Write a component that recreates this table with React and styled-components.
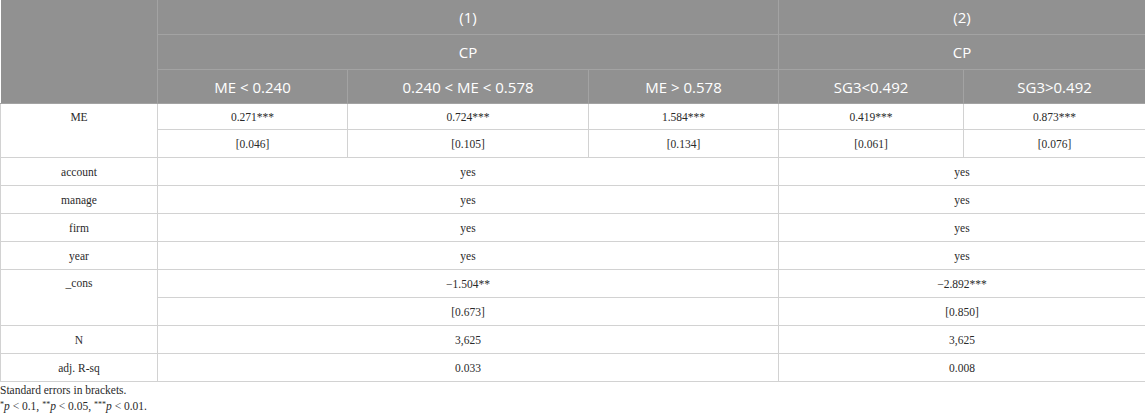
import React from "react"
import styled, { createGlobalStyle } from 'styled-components'

const GlobalStyle = createGlobalStyle`
  body {
    margin: 0;
    background: #ffffff;
  }
`

const Page = styled.div`
  width: 1145px;
  font-family: "Liberation Serif", "Times New Roman", serif;
  color: #222;
`

const Table = styled.table`
  width: 1145px;
  border-collapse: collapse;
  table-layout: fixed;
`

const HeadCell = styled.th`
  background: #919191;
  color: #ffffff;
  font-family: "Open Sans", "Noto Sans", sans-serif;
  font-weight: 400;
  font-size: 15px;
  height: ${props => props.h || 34}px;
  padding: 0;
  text-align: center;
  vertical-align: middle;
  border: 1px solid #a3a3a3;
  border-top: none;
  ${props => props.blank && `border-left: none;`}
`

const Cell = styled.td`
  font-size: 11.5px;
  height: ${props => props.h || 27}px;
  padding: 0;
  text-align: center;
  vertical-align: middle;
  border: 1px solid #d2d2d2;
  color: #2a2a2a;
`

const LabelCell = styled(Cell)`
  vertical-align: top;
  padding-top: 7px;
`

const Notes = styled.div`
  font-size: 11.5px;
  color: #2a2a2a;
  line-height: 16px;
`

const Stars = styled.sup`
  font-size: 8px;
  vertical-align: 3px;
  line-height: 0;
`

const Ital = styled.i`
  font-style: italic;
`

const widths = [157, 190, 241, 190, 185, 182]

const App = () => (
  <Page>
    <GlobalStyle />
    <Table>
      <colgroup>
        {widths.map((w, i) => <col key={i} style={{ width: w }} />)}
      </colgroup>
      <thead>
        <tr>
          <HeadCell rowSpan={3} blank />
          <HeadCell colSpan={3} h={34}>(1)</HeadCell>
          <HeadCell colSpan={2} h={34}>(2)</HeadCell>
        </tr>
        <tr>
          <HeadCell colSpan={3} h={34}>CP</HeadCell>
          <HeadCell colSpan={2} h={34}>CP</HeadCell>
        </tr>
        <tr>
          <HeadCell h={33}>ME &lt; 0.240</HeadCell>
          <HeadCell h={33}>0.240 &lt; ME &lt; 0.578</HeadCell>
          <HeadCell h={33}>ME &gt; 0.578</HeadCell>
          <HeadCell h={33}>SG3&lt;0.492</HeadCell>
          <HeadCell h={33}>SG3&gt;0.492</HeadCell>
        </tr>
      </thead>
      <tbody>
        <tr>
          <LabelCell rowSpan={2}>ME</LabelCell>
          <Cell h={25}>0.271***</Cell>
          <Cell h={25}>0.724***</Cell>
          <Cell h={25}>1.584***</Cell>
          <Cell h={25}>0.419***</Cell>
          <Cell h={25}>0.873***</Cell>
        </tr>
        <tr>
          <Cell>[0.046]</Cell>
          <Cell>[0.105]</Cell>
          <Cell>[0.134]</Cell>
          <Cell>[0.061]</Cell>
          <Cell>[0.076]</Cell>
        </tr>
        {['account', 'manage', 'firm', 'year'].map(name => (
          <tr key={name}>
            <Cell>{name}</Cell>
            <Cell colSpan={3}>yes</Cell>
            <Cell colSpan={2}>yes</Cell>
          </tr>
        ))}
        <tr>
          <LabelCell rowSpan={2}>_cons</LabelCell>
          <Cell colSpan={3}>−1.504**</Cell>
          <Cell colSpan={2}>−2.892***</Cell>
        </tr>
        <tr>
          <Cell colSpan={3}>[0.673]</Cell>
          <Cell colSpan={2}>[0.850]</Cell>
        </tr>
        <tr>
          <Cell>N</Cell>
          <Cell colSpan={3}>3,625</Cell>
          <Cell colSpan={2}>3,625</Cell>
        </tr>
        <tr>
          <Cell>adj. R-sq</Cell>
          <Cell colSpan={3}>0.033</Cell>
          <Cell colSpan={2}>0.008</Cell>
        </tr>
      </tbody>
    </Table>
    <Notes>
      <div>Standard errors in brackets.</div>
      <div>
        <Stars>*</Stars><Ital>p</Ital> &lt; 0.1, <Stars>**</Stars><Ital>p</Ital> &lt; 0.05, <Stars>***</Stars><Ital>p</Ital> &lt; 0.01.
      </div>
    </Notes>
  </Page>
)

export default App
